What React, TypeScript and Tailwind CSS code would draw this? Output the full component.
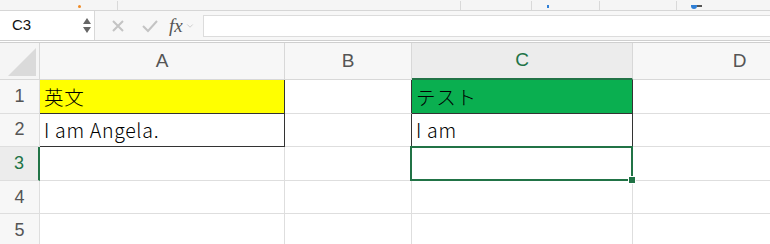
import { ChevronDown } from "lucide-react";

const cellFont = { fontFamily: '"Noto Sans CJK JP", "Noto Sans", sans-serif' };

const gridLine = "border-r border-b border-[#dedede]";
const cellText = "flex items-center pl-[4px] text-[19.5px] font-light tracking-[0.7px]";

const App = () => {
  const rows = [1, 2, 3, 4, 5];

  return (
    <div className="w-[770px] h-[244px] overflow-hidden bg-white font-['Liberation_Sans',sans-serif] text-black">
      {/* toolbar remnants */}
      <div className="h-[11px] bg-[#f5f5f5] border-b border-[#d6d6d6] flex items-end">
        <div className="w-[78px]" />
        <div className="w-[3px] h-[3px] bg-[#f08a24] rounded-full mb-[2px]" />
        <div className="w-[36px]" />
        <div className="w-px h-[9px] bg-[#d9d9d9]" />
        <div className="w-[342px]" />
        <div className="w-px h-[9px] bg-[#d9d9d9]" />
        <div className="w-[70px]" />
        <div className="w-px h-[9px] bg-[#d9d9d9]" />
        <div className="w-[15px]" />
        <div className="w-[2px] h-[3px] bg-[#2f7fd6] mb-[2px]" />
        <div className="w-[50px]" />
        <div className="w-px h-[9px] bg-[#d9d9d9]" />
        <div className="w-[76px]" />
        <div className="w-px h-[9px] bg-[#d9d9d9]" />
        <div className="w-[14px]" />
        <div className="w-[6px] h-[4px] bg-[#2f7fd6] rounded-b-full mb-[1px]" />
        <div className="w-[5px] h-[2px] bg-[#555] mb-[3px]" />
      </div>

      {/* formula bar */}
      <div className="h-[29px] bg-[#f7f7f7] flex items-stretch">
        <div className="w-[95px] bg-white border-r border-[#d8d8d8] flex items-center pl-[12px] pr-[3px]">
          <span className="flex-1 text-[15px] text-[#111]">C3</span>
          <div className="flex flex-col gap-[3px] items-center">
            <div className="w-0 h-0 border-l-[4px] border-r-[4px] border-b-[6px] border-l-transparent border-r-transparent border-b-[#666]" />
            <div className="w-0 h-0 border-l-[4px] border-r-[4px] border-t-[6px] border-l-transparent border-r-transparent border-t-[#666]" />
          </div>
        </div>
        <div className="w-[108px] flex items-center">
          <svg width="14" height="14" viewBox="0 0 14 14" className="ml-[16px]">
            <path d="M2 2 L12 12 M12 2 L2 12" stroke="#c4c4c4" strokeWidth="2" />
          </svg>
          <svg width="18" height="14" viewBox="0 0 18 14" className="ml-[16px]">
            <path d="M2 7 L7 12 L16 2" stroke="#c4c4c4" strokeWidth="2" fill="none" />
          </svg>
          <span className="ml-[10px] text-[19px] italic text-[#555] font-['Liberation_Serif',serif] leading-none">
            fx
          </span>
          <ChevronDown className="ml-[2px] w-[10px] h-[10px] text-[#b5b5b5]" strokeWidth={1.5} />
        </div>
        <div className="flex-1 my-[4px] mb-[3px] bg-white border-t border-b border-l border-[#dcdcdc]" />
      </div>

      {/* double rule */}
      <div className="h-[3px] border-t border-b border-[#cfcfcf]" />

      {/* sheet */}
      <div className="grid grid-cols-[40px_245px_127px_221px_214px]" style={cellFont}>
        {/* column headers */}
        <div className="h-[37px] bg-[#f5f5f5] border-r border-b border-[#d8d8d8] relative">
          <div className="absolute right-[3px] bottom-[3px] w-0 h-0 border-l-[28px] border-l-transparent [border-bottom:28px_solid_#dadada]" />
        </div>
        {["A", "B", "C", "D"].map((c) => (
          <div
            key={c}
            className={
              c === "C"
                ? "h-[37px] bg-[#ececec] border-r border-[#d8d8d8] border-b-2 border-b-[#217346] flex items-center justify-center text-[19px] text-[#217346] font-['Liberation_Sans',sans-serif]"
                : "h-[37px] bg-[#f7f7f7] border-r border-b border-[#d8d8d8] flex items-center justify-center text-[19px] text-[#555] font-['Liberation_Sans',sans-serif]"
            }
          >
            {c}
          </div>
        ))}

        {rows.map((r) => {
          const rowHeader =
            r === 3
              ? "h-[33.6px] bg-[#ececec] border-r-2 border-r-[#217346] border-b border-b-[#dedede] flex items-center justify-center text-[18px] text-[#217346] font-['Liberation_Sans',sans-serif]"
              : "h-[33.6px] bg-[#f7f7f7] border-r border-b border-[#dedede] flex items-center justify-center text-[18px] text-[#555] font-['Liberation_Sans',sans-serif]";

          let a = <div className={gridLine} />;
          let b = <div className={gridLine} />;
          let c = <div className={gridLine} />;
          if (r === 1) {
            a = <div className={`bg-[#ffff00] border-r border-b border-[#333] ${cellText}`}>英文</div>;
            b = <div className="border-r border-r-[#333] border-b border-b-[#dedede]" />;
            c = <div className={`bg-[#0aaf50] border-r border-b border-[#333] ${cellText}`}>テスト</div>;
          }
          if (r === 2) {
            a = <div className={`border-r border-b border-[#333] ${cellText}`}>I am Angela.</div>;
            b = <div className="border-r border-r-[#333] border-b border-b-[#dedede]" />;
            c = <div className={`border-r border-b border-[#333] ${cellText}`}>I am</div>;
          }
          if (r === 3) {
            c = (
              <div className={`${gridLine} relative`}>
                <div className="absolute -left-[2px] -top-[1px] -right-[1px] -bottom-[1px] border-2 border-[#217346]" />
                <div className="absolute -right-[4px] -bottom-[4px] w-[6px] h-[6px] bg-[#217346] border border-white box-content" />
              </div>
            );
          }

          return (
            <div key={r} className="contents">
              <div className={rowHeader}>{r}</div>
              {a}
              {b}
              {c}
              <div className={gridLine} />
            </div>
          );
        })}
      </div>
    </div>
  );
};

export default App;
